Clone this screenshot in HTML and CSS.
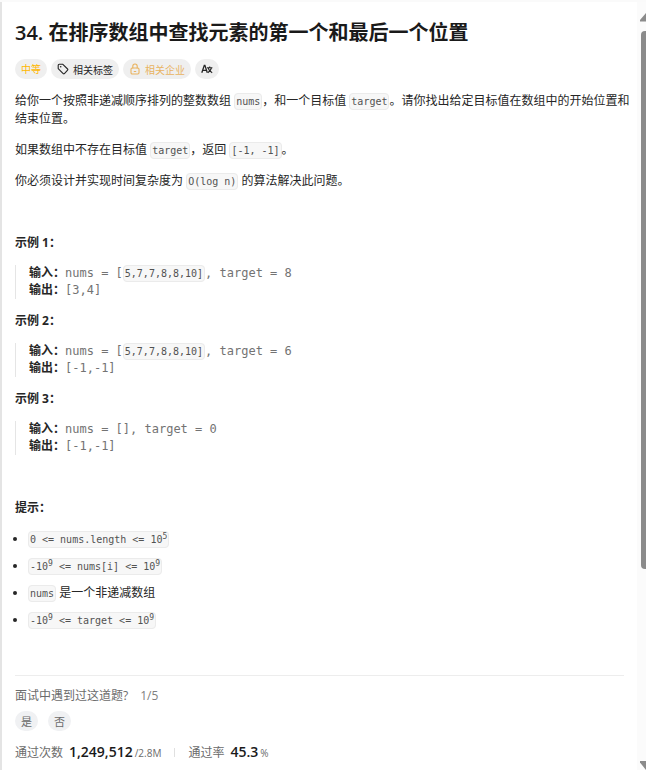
FILE: index.html
```html
<!DOCTYPE html>
<html lang="zh-CN">
<head>
  <meta charset="UTF-8" />
  <meta name="viewport" content="width=device-width, initial-scale=1.0"/>
  <title>34. 在排序数组中查找元素的第一个和最后一个位置</title>
  <link rel="stylesheet" href="styles.css">
</head>
<body>
  <main class="problem">
    <h1 class="title">34. 在排序数组中查找元素的第一个和最后一个位置</h1>

    <div class="tags">
      <span class="tag medium">中等</span>
      <button class="tag" type="button">
        <svg class="icon" viewBox="0 0 12 12" fill="none" stroke="currentColor" stroke-width="1.1" stroke-linejoin="round">
          <path d="M1.2 2.2 Q1.2 1.2 2.2 1.2 H5.6 L10.6 6 Q11.2 6.6 10.6 7.2 L7.4 10.6 Q6.8 11.2 6.2 10.6 L1.2 5.6 Z"/>
          <circle cx="3.7" cy="3.7" r="0.8" fill="currentColor" stroke="none"/>
        </svg>
        相关标签
      </button>
      <button class="tag premium" type="button">
        <svg class="icon" viewBox="0 0 12 12" fill="none" stroke="currentColor" stroke-width="1.1" stroke-linecap="round">
          <rect x="2" y="5" width="8" height="6" rx="1.2"/>
          <path d="M3.8 5 V3.2 A2.2 2.2 0 0 1 8.2 3.2 V5 M5.2 8.5 H6.8"/>
        </svg>
        相关企业
      </button>
      <button class="tag translate" type="button" aria-label="翻译">
        <svg class="icon" viewBox="0 0 12 12" fill="none" stroke="currentColor" stroke-width="1.3">
          <path d="M0.8 9.8 L3.3 2.4 H3.9 L6.3 9.8 M1.7 7.4 H5.4"/>
          <path d="M6 4.8 H11.4 M8.7 3.4 V4.8 M7.1 5 Q8.2 8.4 11.2 9.8 M10.4 5 Q9.6 8.2 6.8 9.8" stroke-width="1.1"/>
        </svg>
      </button>
    </div>

    <div class="description">
      <p>给你一个按照非递减顺序排列的整数数组 <code>nums</code>，和一个目标值 <code>target</code>。请你找出给定目标值在数组中的开始位置和结束位置。</p>
      <p>如果数组中不存在目标值 <code>target</code>，返回 <code>[-1, -1]</code>。</p>
      <p>你必须设计并实现时间复杂度为 <code>O(log n)</code> 的算法解决此问题。</p>
      <p>&nbsp;</p>

      <p><strong>示例 1：</strong></p>
<pre><strong>输入：</strong>nums = [<code>5,7,7,8,8,10]</code>, target = 8
<strong>输出：</strong>[3,4]</pre>

      <p><strong>示例 2：</strong></p>
<pre><strong>输入：</strong>nums = [<code>5,7,7,8,8,10]</code>, target = 6
<strong>输出：</strong>[-1,-1]</pre>

      <p><strong>示例 3：</strong></p>
<pre><strong>输入：</strong>nums = [], target = 0
<strong>输出：</strong>[-1,-1]</pre>
      <p>&nbsp;</p>

      <p><strong>提示：</strong></p>
      <ul>
        <li><code>0 &lt;= nums.length &lt;= 10<sup>5</sup></code></li>
        <li><code>-10<sup>9</sup> &lt;= nums[i] &lt;= 10<sup>9</sup></code></li>
        <li><code>nums</code> 是一个非递减数组</li>
        <li><code>-10<sup>9</sup> &lt;= target &lt;= 10<sup>9</sup></code></li>
      </ul>
    </div>

    <footer class="footer">
      <div class="question">
        <span>面试中遇到过这道题?</span>
        <span class="muted">1/5</span>
      </div>
      <div class="answers">
        <button class="answer" type="button">是</button>
        <button class="answer" type="button">否</button>
      </div>
      <div class="stats">
        <div class="stat">
          <span class="stat-label">通过次数</span>
          <span class="stat-value">1,249,512</span>
          <small>/2.8M</small>
        </div>
        <div class="stat">
          <span class="stat-label">通过率</span>
          <span class="stat-value">45.3</span>
          <small>%</small>
        </div>
      </div>
    </footer>
  </main>

  <div class="scrollbar" aria-hidden="true">
    <svg class="arrow" viewBox="0 0 6 10"><path d="M6 1 L0 8 V9.5 H6 Z"/></svg>
    <div class="thumb"></div>
    <svg class="arrow arrow-down" viewBox="0 0 6 10"><path d="M0 1 H6 V10 L0 2.5 Z"/></svg>
  </div>
</body>
</html>
```
FILE: styles.css
```css
:root {
  --text: #262626;
  --text-secondary: #6b6b6b;
  --fill: #efefef;
  --track: #fbfbfb;
  --thumb: #8b8b8b;
  --sans: "Open Sans", "Noto Sans CJK SC", sans-serif;
  --mono: "DejaVu Sans Mono", "Noto Sans CJK SC", monospace;
}

* {
  margin: 0;
  padding: 0;
  box-sizing: border-box;
}

body {
  min-height: 100vh;
  display: flex;
  background: #fff;
  color: var(--text);
  font-family: var(--sans);
  font-size: 12px;
  line-height: 18px;
  border-top: 2px solid #fafafa;
}

button {
  border: none;
  font-family: inherit;
  cursor: pointer;
}

.problem {
  flex: 1;
  min-width: 0;
  border-left: 2px solid #e4e4e4;
  padding: 16px 2px 0 13px;
}

.title {
  font-size: 20px;
  font-weight: 600;
  line-height: 30px;
  color: #1a1a1a;
}

/* tags */
.tags {
  display: flex;
  gap: 4px;
  margin: 11px 0 13px;
}

.tag {
  display: flex;
  align-items: center;
  gap: 4px;
  height: 20px;
  padding: 0 6px;
  border-radius: 10px;
  background: var(--fill);
  color: var(--text);
  font-size: 10px;
}

.medium {
  color: #ffb700;
}

.premium {
  color: #e9b35f;
}

.icon {
  width: 12px;
  height: 12px;
}

/* description */
.description p,
.description pre {
  margin-bottom: 13px;
}

code {
  padding: 2px 1px;
  border: 1px solid #ebebeb;
  border-radius: 4px;
  background: #f7f7f7;
  color: #525252;
  font-family: var(--mono);
  font-size: 10px;
  line-height: 10px;
}

pre {
  padding-left: 13px;
  border-left: 1px solid #e5e5e5;
  color: #737373;
  font-family: var(--mono);
  font-size: 12px;
  line-height: 17px;
}

pre strong {
  color: var(--text);
  font-family: var(--sans);
  line-height: 12px;
}

ul {
  padding-left: 13px;
}

li {
  margin-bottom: 9px;
}

sup {
  font-size: 8px;
  line-height: 0;
}

/* footer */
.footer {
  margin: 46px 11px 0 0;
  padding-top: 11px;
  border-top: 1px solid #ededed;
  color: var(--text-secondary);
}

.question,
.answers,
.stats {
  display: flex;
  align-items: center;
}

.question {
  gap: 12px;
}

.muted {
  color: #808080;
}

.answers {
  gap: 10px;
  margin: 6px 0 12px;
}

.answer {
  height: 20px;
  padding: 0 6px;
  border-radius: 10px;
  background: #f0f1f3;
  color: var(--text-secondary);
  font-size: 11px;
}

.stat {
  display: flex;
  align-items: baseline;
}

.stat + .stat {
  margin-left: 13px;
  padding-left: 14px;
  background: linear-gradient(#e0e0e0, #e0e0e0) left center / 1px 9px no-repeat;
}

.stat-value {
  margin: 0 2px 0 6px;
  color: #1a1a1a;
  font-size: 14px;
  font-weight: 600;
}

.stat small {
  font-size: 10px;
}

/* scrollbar */
.scrollbar {
  display: flex;
  flex-direction: column;
  align-items: flex-end;
  width: 9px;
  padding-top: 10px;
  background: var(--track);
}

.arrow {
  width: 6px;
  height: 10px;
  fill: var(--thumb);
}

.arrow-down {
  margin-top: auto;
}

.thumb {
  width: 5px;
  height: 71%;
  margin-top: 9px;
  border-radius: 4px 0 0 4px;
  background: var(--thumb);
}
```
